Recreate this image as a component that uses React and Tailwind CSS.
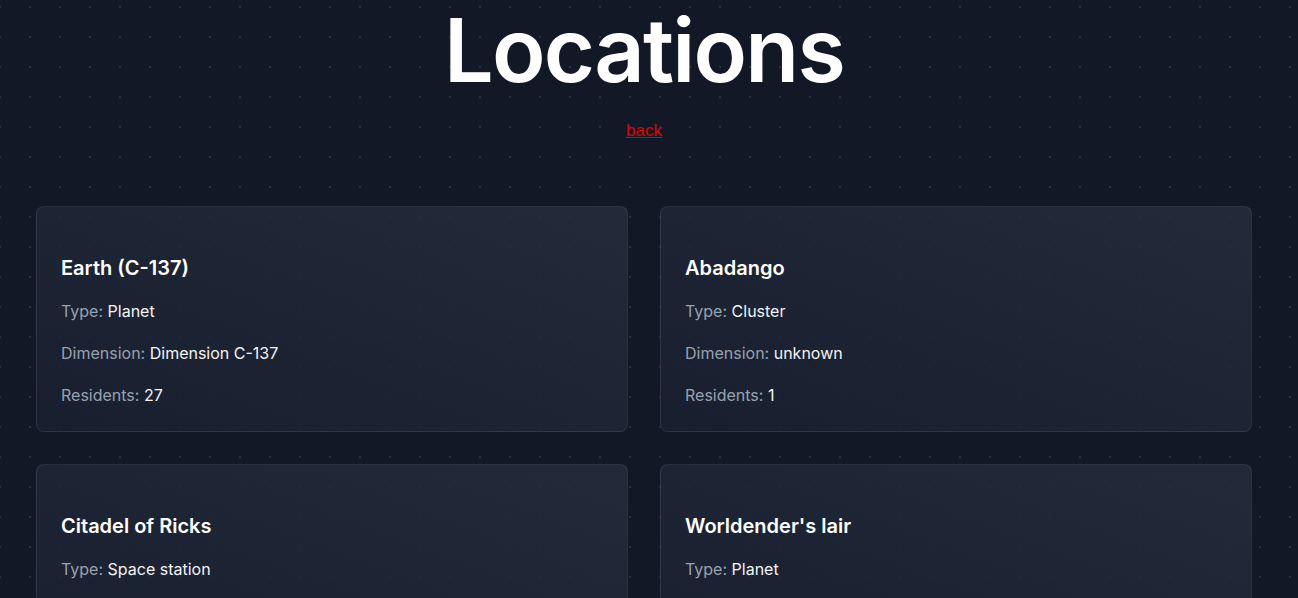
import React from 'react';

const locations = [
    { name: 'Earth (C-137)', type: 'Planet', dimension: 'Dimension C-137', residents: 27 },
    { name: 'Abadango', type: 'Cluster', dimension: 'unknown', residents: 1 },
    { name: 'Citadel of Ricks', type: 'Space station', dimension: 'unknown', residents: 101 },
    { name: "Worldender's lair", type: 'Planet', dimension: 'unknown', residents: 4 },
];

function LocationCard({ location }) {
    return (
        <div className="rounded-lg border border-white/[0.07] bg-gradient-to-tr from-[#1a2130]/80 to-[#272f3e]/80 px-6 pt-[47px] pb-[24px]">
            <h2 className="text-[20px] font-semibold leading-[28px] text-white">{location.name}</h2>
            <p className="mt-[17px] text-[16px] leading-[24px] text-gray-400">
                Type: <span className="text-gray-100">{location.type}</span>
            </p>
            <p className="mt-[18px] text-[16px] leading-[24px] text-gray-400">
                Dimension: <span className="text-gray-100">{location.dimension}</span>
            </p>
            <p className="mt-[18px] text-[16px] leading-[24px] text-gray-400">
                Residents: <span className="text-gray-100">{location.residents}</span>
            </p>
        </div>
    );
}

export default function App() {
    return (
        <div
            className="min-h-screen bg-[#121826] bg-[radial-gradient(circle,#262d3c_1px,transparent_1.5px)] bg-[length:30px_30px] bg-[position:-15px_-8px] font-['Inter',sans-serif]"
        >
            <div className="w-[1288px]">
                {/* Header */}
                <div className="flex flex-col items-center pt-[6px]">
                    <h1 className="text-[88px] font-semibold leading-none tracking-[-0.02em] text-white">Locations</h1>
                    <a href="#" className="mt-[27px] font-['Liberation_Sans',sans-serif] text-[17px] leading-[20px] text-[#e00000] underline">
                        back
                    </a>
                </div>

                {/* Cards */}
                <div className="mt-[65px] grid grid-cols-2 gap-8 px-9 pb-8">
                    {locations.map(location => (
                        <LocationCard key={location.name} location={location} />
                    ))}
                </div>
            </div>
        </div>
    );
}
